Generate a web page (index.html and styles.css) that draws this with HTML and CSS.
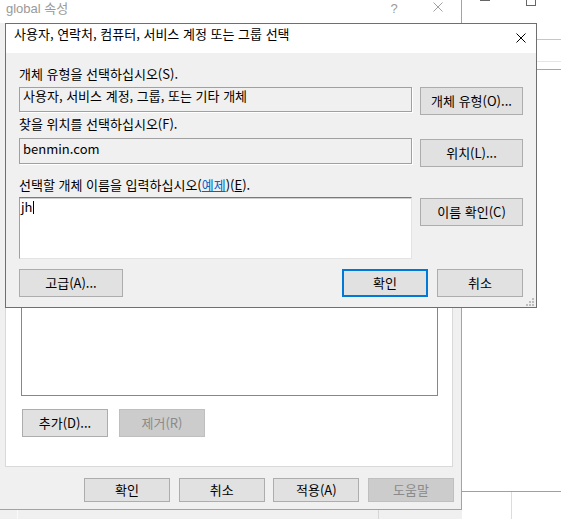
FILE: index.html
```html
<!DOCTYPE html>
<html lang="ko">
<head>
<meta charset="utf-8">
<title>개체 선택</title>
<link rel="stylesheet" href="styles.css">
</head>
<body>
<div class="desktop">

  <div class="win-right">
    <div class="wr-controls"><span class="wr-min"></span><span class="wr-max"></span></div>
    <div class="wr-rule r1"></div>
    <div class="wr-rule r2"></div>
    <div class="wr-rule r3"></div>
  </div>

  <div class="win-under">
    <div class="wu-left"><span class="vline v1"></span><span class="vline v2"></span></div>
    <div class="wu-right"><span class="vline v3"></span></div>
  </div>

  <div class="win-props">
    <div class="wp-title">
      <span class="wp-title-text">global 속성</span>
      <span class="wp-help">?</span>
      <svg class="wp-close" width="10" height="10" viewBox="0 0 10 10"><path d="M0.5 0.5L9.5 9.5M9.5 0.5L0.5 9.5" stroke="#a0a0a0" stroke-width="1"/></svg>
    </div>
    <div class="wp-body">
      <div class="tab-panel">
        <div class="listbox"></div>
        <div class="panel-buttons">
          <div class="btn btn-panel">추가(D)...</div>
          <div class="btn btn-panel disabled">제거(R)</div>
        </div>
      </div>
      <div class="wp-buttons">
        <div class="btn btn-foot">확인</div>
        <div class="btn btn-foot">취소</div>
        <div class="btn btn-foot">적용(A)</div>
        <div class="btn btn-foot disabled">도움말</div>
      </div>
    </div>
  </div>

  <div class="dlg">
    <div class="dlg-title">
      <span class="dlg-title-text">사용자, 연락처, 컴퓨터, 서비스 계정 또는 그룹 선택</span>
      <svg class="dlg-close" width="10" height="10" viewBox="0 0 10 10"><path d="M0.5 0.5L9.5 9.5M9.5 0.5L0.5 9.5" stroke="#000" stroke-width="1"/></svg>
    </div>
    <div class="dlg-body">
      <div class="field-label l1">개체 유형을 선택하십시오(S).</div>
      <div class="field-row">
        <div class="ro-box">사용자, 서비스 계정, 그룹, 또는 기타 개체</div>
        <div class="btn btn-side">개체 유형(O)...</div>
      </div>

      <div class="field-label l2">찾을 위치를 선택하십시오(F).</div>
      <div class="field-row">
        <div class="ro-box latin">benmin.com</div>
        <div class="btn btn-side offset">위치(L)...</div>
      </div>

      <div class="field-label l3">선택할 개체 이름을 입력하십시오(<span class="link">예제</span>)(<u>E</u>).</div>
      <div class="field-row">
        <div class="names-box">jh<span class="caret"></span></div>
        <div class="btn btn-side offset">이름 확인(C)</div>
      </div>

      <div class="dlg-buttons">
        <div class="btn btn-adv">고급(A)...</div>
        <div class="btn btn-dlg default">확인</div>
        <div class="btn btn-dlg">취소</div>
      </div>

      <svg class="grip" width="8" height="8" viewBox="0 0 8 8">
        <rect x="6" y="0" width="2" height="2" fill="#bdbdbd"/>
        <rect x="3" y="3" width="2" height="2" fill="#bdbdbd"/>
        <rect x="6" y="3" width="2" height="2" fill="#bdbdbd"/>
        <rect x="0" y="6" width="2" height="2" fill="#bdbdbd"/>
        <rect x="3" y="6" width="2" height="2" fill="#bdbdbd"/>
        <rect x="6" y="6" width="2" height="2" fill="#bdbdbd"/>
      </svg>
    </div>
  </div>

</div>
</body>
</html>
```

FILE: styles.css
```css
* { box-sizing: border-box; }
html, body { margin: 0; padding: 0; }
body {
  width: 561px;
  height: 519px;
  overflow: hidden;
  background: #fff;
  font-family: "Noto Sans CJK KR", "Noto Sans", sans-serif;
  font-size: 13px;
  color: #000;
}
.desktop { position: relative; width: 561px; height: 519px; overflow: hidden; }

/* window at the right, behind */
.win-right {
  position: absolute; left: 462px; top: 0; width: 99px; height: 491px;
  background: #fff; display: flex; flex-direction: column;
}
.wr-controls { height: 6px; display: flex; align-items: flex-start; }
.wr-min { margin-left: 18px; width: 10px; height: 1px; background: #666; }
.wr-max { margin-left: 36px; margin-top: -4px; width: 10px; height: 10px; border: 1px solid #666; }
.wr-rule { height: 1px; }
.wr-rule.r1 { margin-top: 33px; background: #c6c6c6; }
.wr-rule.r2 { margin-top: 21px; background: #e6e6e6; }
.wr-rule.r3 { margin-top: 7px; background: #a8a8a8; }

/* window at the bottom, behind */
.win-under {
  position: absolute; left: 0; top: 491px; width: 561px; height: 28px;
  border-top: 1px solid #a0a0a0; display: flex;
}
.wu-left { width: 462px; background: #f0f0f0; display: flex; }
.wu-right { flex: 1; background: #fff; display: flex; }
.vline { width: 1px; height: 100%; }
.vline.v1 { margin-left: 17px; background: #fafafa; }
.vline.v2 { margin-left: 360px; background: #d6d6d6; }
.vline.v3 { margin-left: 49px; background: #dcdcdc; }

/* global properties window */
.win-props {
  position: absolute; left: 0; top: 0; width: 462px; height: 510px;
  background: #f0f0f0;
  border-right: 1px solid #a3a3a3; border-bottom: 1px solid #a3a3a3;
  display: flex; flex-direction: column;
}
.wp-title {
  height: 23px; background: #fff; color: #9a9a9a;
  display: flex; align-items: flex-start; padding: 1px 18px 0 6px;
}
.wp-title-text {
  font-family: "Liberation Sans", "Noto Sans CJK KR", sans-serif;
  font-size: 13px; line-height: 15px;
}
.wp-help {
  margin-left: auto; margin-right: 33px; width: 12px; text-align: center;
  font-family: "Liberation Sans", sans-serif; font-size: 13px; line-height: 15px;
}
.wp-close { margin-top: 1px; display: block; }
.wp-body { flex: 1; display: flex; flex-direction: column; padding: 10px 0 0 5px; }
.tab-panel {
  width: 448px; height: 434px; background: #fff; border: 1px solid #d9d9d9;
  display: flex; flex-direction: column; padding: 0 0 29px 15px;
}
.listbox { flex: 1; width: 417px; background: #fff; border: 1px solid #828790; }
.panel-buttons { margin-top: 13px; margin-left: 1px; display: flex; gap: 11px; }
.wp-buttons { margin-top: 11px; padding-left: 79px; display: flex; gap: 8.67px; }

/* buttons */
.btn {
  display: flex; align-items: center; justify-content: center;
  background: #e1e1e1; border: 1px solid #adadad; color: #000;
  line-height: 16px; white-space: nowrap;
}
.btn.disabled { background: #cccccc; border-color: #bfbfbf; color: #8a8a8a; }
.btn-panel { width: 86px; height: 28px; }
.btn-foot { width: 86px; height: 24px; }
.btn-side { width: 103px; height: 28px; }
.btn-side.offset { margin-top: 1px; }
.btn-adv { width: 104px; height: 28px; }
.btn-dlg { width: 86px; height: 28px; }
.btn-dlg.default { margin-left: auto; border: 2px solid #0078d7; }
.dlg-buttons { margin-top: 10px; display: flex; gap: 9px; }

/* select dialog */
.dlg {
  position: absolute; left: 5px; top: 23px; width: 532px; height: 285px;
  border: 1px solid #6f6f6f; background: #f0f0f0;
  display: flex; flex-direction: column;
}
.dlg-title {
  height: 29px; background: #fff; display: flex; align-items: flex-start;
  padding: 0 10px 0 8px;
}
.dlg-title-text { margin-top: 2px; line-height: 16px; white-space: nowrap; }
.dlg-close { margin-left: auto; margin-top: 9px; display: block; }
.dlg-body { flex: 1; padding: 13px 13px 0 13px; display: flex; flex-direction: column; }

.field-label { height: 16px; line-height: 16px; white-space: nowrap; }
.field-label.l1 { margin-bottom: 5px; }
.field-label.l2 { margin-top: 1px; margin-bottom: 6px; }
.field-label.l3 { margin-top: 10px; margin-bottom: 4px; }
.link { color: #0066cc; text-decoration: underline; }

.field-row { display: grid; grid-template-columns: 394px 103px; column-gap: 7px; align-items: start; }
.ro-box {
  height: 25px; width: 393px; background: #f0f0f0;
  border: 1px solid #a0a0a0; box-shadow: 1px 1px 0 #fff;
  padding: 0 3px; line-height: 16px; white-space: nowrap;
}
.ro-box.latin { height: 26px; padding-top: 2px; }
.names-box {
  height: 62px; width: 393px; background: #fff;
  border: 1px solid; border-color: #7a7a7a #e3e3e3 #e3e3e3 #a0a0a0;
  box-shadow: inset 0 1px 0 #cfcfcf;
  padding: 1px 1px 0 1px; line-height: 16px;
}
.caret { display: inline-block; width: 1px; height: 13px; background: #000; vertical-align: -2px; margin-left: 1px; }

.grip { position: absolute; right: 2px; bottom: 1px; display: block; }
```
